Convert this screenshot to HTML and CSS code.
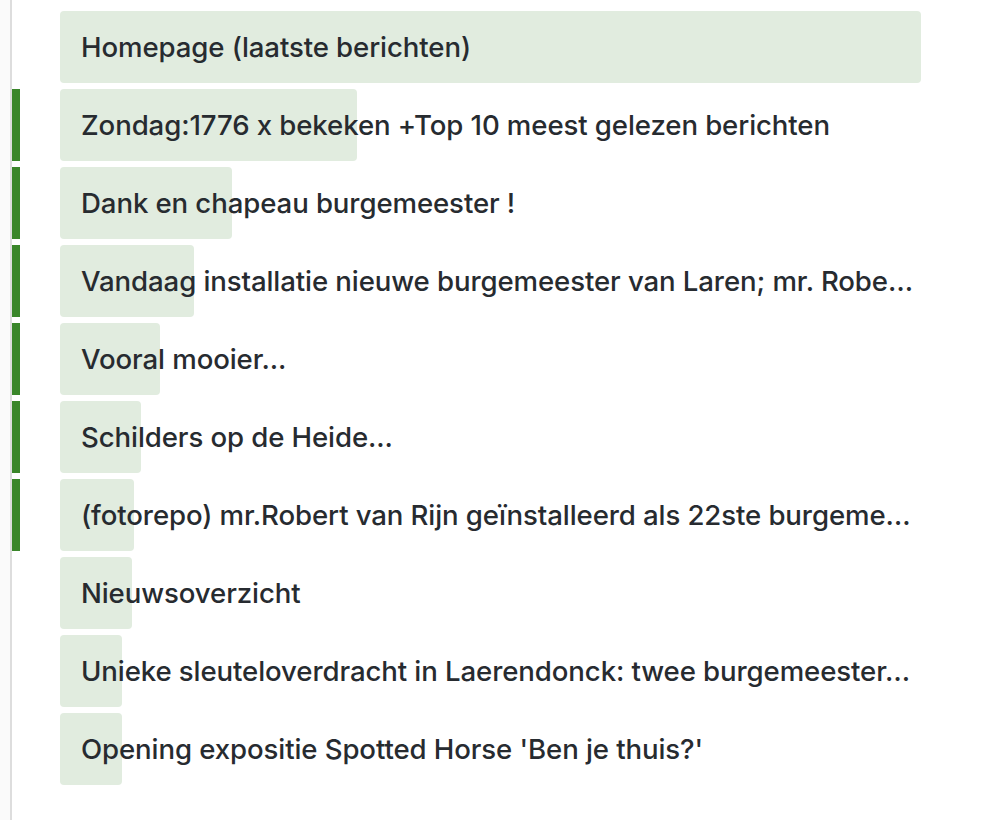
FILE: index.html
```html
<!DOCTYPE html>
<html>
<head>
<meta charset="utf-8">
<link rel="stylesheet" href="styles.css">
</head>
<body>
<div class="side">
  <div class="list">
    <div class="item"><span class="mark"></span><div class="row"><div class="fill" style="width:100%"></div><span class="label">Homepage (laatste berichten)</span></div></div>
    <div class="item"><span class="mark on"></span><div class="row"><div class="fill" style="width:297px"></div><span class="label">Zondag:1776 x bekeken +Top 10 meest gelezen berichten</span></div></div>
    <div class="item"><span class="mark on"></span><div class="row"><div class="fill" style="width:172px"></div><span class="label">Dank en chapeau burgemeester !</span></div></div>
    <div class="item"><span class="mark on"></span><div class="row"><div class="fill" style="width:134px"></div><span class="label">Vandaag installatie nieuwe burgemeester van Laren; mr. Robe…</span></div></div>
    <div class="item"><span class="mark on"></span><div class="row"><div class="fill" style="width:100px"></div><span class="label">Vooral mooier...</span></div></div>
    <div class="item"><span class="mark on"></span><div class="row"><div class="fill" style="width:81px"></div><span class="label">Schilders op de Heide...</span></div></div>
    <div class="item"><span class="mark on"></span><div class="row"><div class="fill" style="width:74px"></div><span class="label">(fotorepo) mr.Robert van Rijn geïnstalleerd als 22ste burgeme…</span></div></div>
    <div class="item"><span class="mark"></span><div class="row"><div class="fill" style="width:72px"></div><span class="label">Nieuwsoverzicht</span></div></div>
    <div class="item"><span class="mark"></span><div class="row"><div class="fill" style="width:62px"></div><span class="label">Unieke sleuteloverdracht in Laerendonck: twee burgemeester…</span></div></div>
    <div class="item"><span class="mark"></span><div class="row"><div class="fill" style="width:62px"></div><span class="label">Opening expositie Spotted Horse 'Ben je thuis?'</span></div></div>
  </div>
</div>
</body>
</html>
```
FILE: styles.css
```css
html, body {
  margin: 0;
  padding: 0;
  background: #ffffff;
}
body {
  font-family: Inter, "Noto Sans", sans-serif;
  color: #272b30;
  width: 1002px;
  height: 820px;
  overflow: hidden;
  background: linear-gradient(to right, #fafafa 0, #fafafa 10px, #ffffff 10px);
}
.side {
  margin-left: 10px;
  border-left: 2px solid #dddddd;
  background: #ffffff;
  height: 820px;
  padding-top: 11px;
  box-sizing: border-box;
}
.list {
  display: flex;
  flex-direction: column;
  gap: 6px;
}
.item {
  display: flex;
  align-items: stretch;
  gap: 40px;
  height: 72px;
}
.mark {
  width: 8px;
  flex: none;
}
.mark.on {
  background: #3a862a;
}
.row {
  position: relative;
  width: 861px;
  flex: none;
  display: flex;
  align-items: center;
  padding: 0 0 0 21px;
  box-sizing: border-box;
}
.fill {
  position: absolute;
  left: 0;
  top: 0;
  bottom: 0;
  background: #e1ecdf;
  border-radius: 4px;
}
.label {
  position: relative;
  font-size: 27.6px;
  font-weight: 500;
  letter-spacing: -0.1px;
  white-space: nowrap;
  overflow: hidden;
  text-overflow: ellipsis;
  min-width: 0;
}
```
